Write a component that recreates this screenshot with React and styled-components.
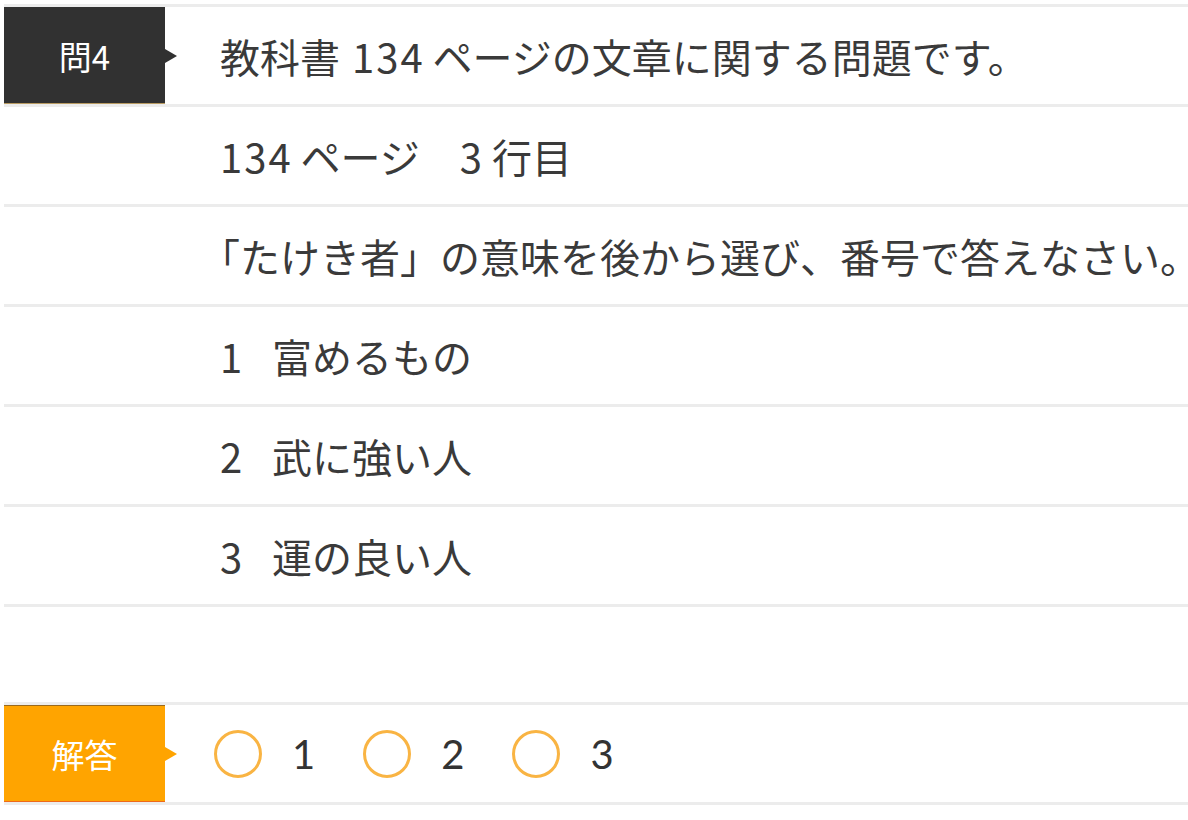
import React from "react";
import styled, { createGlobalStyle } from "styled-components";

const GlobalStyle = createGlobalStyle`
  html, body {
    margin: 0;
    padding: 0;
    background: #fff;
  }
  body {
    font-family: "Noto Sans CJK JP", "Noto Sans", sans-serif;
    color: #333;
    overflow: hidden;
  }
`;

const Page = styled.div`
  padding: 4px 0 0 4px;
`;

const Row = styled.div`
  display: flex;
  align-items: stretch;
  height: 97px;
  border-top: 3px solid #ececec;
  ${(props) => props.last && "border-bottom: 3px solid #ececec;"}
`;

const Spacer = styled.div`
  height: 95px;
`;

const Label = styled.div`
  position: relative;
  flex: 0 0 161px;
  display: flex;
  align-items: center;
  justify-content: center;
  box-sizing: border-box;
  background: ${(props) => props.bg};
  border-top: 1px solid ${(props) => props.top};
  border-bottom: 1px solid ${(props) => props.edge};
  color: #fff;
  font-size: 33px;

  &::after {
    content: "";
    position: absolute;
    right: -12px;
    top: 50%;
    margin-top: -7px;
    border-left: 12px solid ${(props) => props.bg};
    border-top: 7px solid transparent;
    border-bottom: 7px solid transparent;
  }
`;

const Blank = styled.div`
  flex: 0 0 161px;
`;

const Text = styled.div`
  display: flex;
  align-items: center;
  padding-left: 55px;
  font-size: 40px;
  white-space: nowrap;
  color: #3a3a3a;
`;

const Digits = styled.span`
  letter-spacing: 2px;
  margin-left: ${(props) => (props.lead ? "12px" : "0")};
  margin-right: 8px;
`;

const HalfPunct = styled.span`
  font-feature-settings: "halt";
`;

const Num = styled.span`
  display: inline-block;
  width: 52px;
`;

const Options = styled.div`
  display: flex;
  align-items: center;
  padding-left: 49px;
`;

const Option = styled.label`
  display: flex;
  align-items: center;
  margin-right: 48px;
  font-family: "Lato", "Noto Sans", sans-serif;
  font-size: 40px;
  color: #333;
`;

const Circle = styled.span`
  display: inline-block;
  box-sizing: border-box;
  width: 48px;
  height: 48px;
  border-radius: 50%;
  border: 3px solid #f9b443;
  margin-right: 30px;
`;

const choices = ["富めるもの", "武に強い人", "運の良い人"];

export default function App() {
  return (
    <Page>
      <GlobalStyle />
      <Row>
        <Label bg="#313131" top="#313131" edge="#b99b62">
          問4
        </Label>
        <Text>
          教科書<Digits lead>134</Digits>ページの文章に関する問題です。
        </Text>
      </Row>
      <Row>
        <Blank />
        <Text>
          <Digits>134</Digits>ページ　<Digits>3</Digits>行目
        </Text>
      </Row>
      <Row>
        <Blank />
        <Text>
          <HalfPunct>「</HalfPunct>たけき者」の意味を後から選び、番号で答えなさい
          <HalfPunct>。</HalfPunct>
        </Text>
      </Row>
      {choices.map((c, i) => (
        <Row key={c} last={i === choices.length - 1}>
          <Blank />
          <Text>
            <Num>{i + 1}</Num>
            {c}
          </Text>
        </Row>
      ))}
      <Spacer />
      <Row last>
        <Label bg="#ffa400" top="#9a6a1e" edge="#ee6a1a">
          解答
        </Label>
        <Options>
          {[1, 2, 3].map((n) => (
            <Option key={n}>
              <Circle />
              {n}
            </Option>
          ))}
        </Options>
      </Row>
    </Page>
  );
}
